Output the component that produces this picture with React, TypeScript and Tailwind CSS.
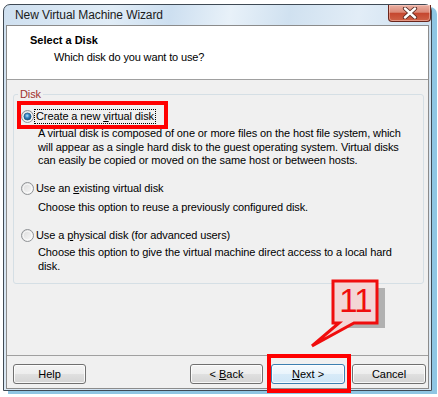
import React, { useId } from "react";

const Radio = ({ checked }: { checked?: boolean }) => {
  const id = useId().replace(/:/g, "");
  return (
    <svg width="13" height="13" viewBox="0 0 13 13" className="shrink-0">
      <defs>
        <linearGradient id={`o${id}`} x1="0" y1="0" x2="1" y2="1">
          <stop offset="0" stopColor="#d8d8d8" />
          <stop offset="1" stopColor="#fcfcfc" />
        </linearGradient>
        <radialGradient id={`d${id}`} cx="0.45" cy="0.4" r="0.6">
          <stop offset="0" stopColor="#b6e2fb" />
          <stop offset="0.45" stopColor="#3b8cc9" />
          <stop offset="1" stopColor="#124a78" />
        </radialGradient>
      </defs>
      <circle cx="6.5" cy="6.5" r="6" fill={`url(#o${id})`} stroke="#8f9295" strokeWidth="1" />
      <circle cx="6.5" cy="6.5" r="4.3" fill="none" stroke="#ffffff" strokeOpacity="0.7" strokeWidth="1" />
      {checked && <circle cx="6.5" cy="6.5" r="3.6" fill={`url(#d${id})`} stroke="#1d4f79" strokeWidth="0.6" />}
    </svg>
  );
};

const Btn = ({ children, def, w }: { children: React.ReactNode; def?: boolean; w: string }) => (
  <div
    className={
      def
        ? "h-[20px] w-[74px] rounded-[3px] border border-[#3c7fb1] bg-[linear-gradient(#f4fafe_0%,#e9f4fc_50%,#d8ebf8_50%,#cfe6f7_100%)] shadow-[inset_0_0_0_1px_rgba(255,255,255,0.8)]"
        : w === "73"
        ? "h-[20px] w-[73px] rounded-[3px] border border-[#707070] bg-[linear-gradient(#f4f4f4_0%,#ededed_50%,#e0e0e0_50%,#d4d4d4_100%)] shadow-[inset_0_0_0_1px_rgba(255,255,255,0.8)]"
        : "h-[20px] w-[74px] rounded-[3px] border border-[#707070] bg-[linear-gradient(#f4f4f4_0%,#ededed_50%,#e0e0e0_50%,#d4d4d4_100%)] shadow-[inset_0_0_0_1px_rgba(255,255,255,0.8)]"
    }
  >
    <div className="flex h-full items-center justify-center text-[11px] leading-[13px] text-black">
      <span className="whitespace-pre">{children}</span>
    </div>
  </div>
);

export default function App() {
  return (
    <div className="relative h-[397px] w-[438px] overflow-hidden bg-white pl-[3px] pt-[4px] font-['Liberation_Sans',Arial,sans-serif]">
      <div className="flex h-[387px] w-[429px] flex-col rounded-t-[7px] border border-[#3f4a55] bg-[linear-gradient(100deg,#cfe0f0_0%,#e0ecf6_22%,#cddff0_34%,#e8f1f9_46%,#d0e1f0_58%,#e2edf7_72%,#cee0f0_86%,#dce9f5_100%)] shadow-[5px_3px_0_0_#8fc6e3]">
        {/* title bar */}
        <div className="flex h-[20px] shrink-0 items-start justify-between">
          <div className="pl-[11px] pt-[3px] text-[12px] leading-[15px] tracking-[-0.1px] text-[#1b1b1b]">
            New Virtual Machine Wizard
          </div>
          <div className="flex h-[17px] w-[43px] items-center justify-center rounded-b-[4px] border border-t-0 border-[#6a261c] bg-[linear-gradient(#eab0a3_0%,#dc8a78_45%,#c5472f_52%,#cf6247_100%)] shadow-[inset_0_0_0_1px_rgba(255,220,210,0.45)]">
            <svg width="16" height="12" viewBox="0 0 16 12">
              <path d="M3 1.5 L13 10.5 M13 1.5 L3 10.5" stroke="#5a2a22" strokeWidth="4.2" strokeLinecap="round" />
              <path d="M3 1.5 L13 10.5 M13 1.5 L3 10.5" stroke="#ffffff" strokeWidth="2.4" strokeLinecap="round" />
            </svg>
          </div>
        </div>

        {/* content */}
        <div className="mx-[2px] mb-[1px] flex flex-1 flex-col border border-[#8b8b8b] bg-[#f0f0f0]">
          <div className="h-[54px] shrink-0 border-b border-[#a0a0a0] bg-white">
            <div className="pl-[23px] pt-[8px] text-[11px] font-bold leading-[13px] text-black">Select a Disk</div>
            <div className="mt-[4px] pl-[47px] text-[11px] leading-[13px] tracking-[-0.15px] text-black">
              Which disk do you want to use?
            </div>
          </div>

          <div className="flex-1 pl-[6px] pt-[8px] text-[11px] tracking-[-0.1px] text-black">
            <fieldset className="w-[411px] rounded-[3px] border border-[#d5dfe5] pb-[10px]">
              <legend className="ml-[4px] px-[2px] text-[11px] leading-[13px] text-[#a0322d]">Disk</legend>

              <div className="relative flex h-[28px] items-center pl-[7px] pt-[2px]">
                <Radio checked />
                <span className="border border-dotted border-black px-[1px] leading-[13px]">
                  Create a new <u>v</u>irtual disk
                </span>
                <div className="absolute left-[3px] top-0 h-[28px] w-[151px] border-[4px] border-[#ff0000]" />
              </div>
              <div className="-mt-[2px] pl-[24px] leading-[13.5px]">
                <div>A virtual disk is composed of one or more files on the host file system, which</div>
                <div>will appear as a single hard disk to the guest operating system. Virtual disks</div>
                <div>can easily be copied or moved on the same host or between hosts.</div>
              </div>

              <div className="mt-[13px] flex h-[16px] items-center pl-[7px]">
                <Radio />
                <span className="border border-transparent px-[1px] leading-[13px]">
                  Use an <u>e</u>xisting virtual disk
                </span>
              </div>
              <div className="mt-[4px] pl-[24px] leading-[13.5px]">
                <div>Choose this option to reuse a previously configured disk.</div>
              </div>

              <div className="mt-[13px] flex h-[16px] items-center pl-[7px]">
                <Radio />
                <span className="border border-transparent px-[1px] leading-[13px]">
                  Use a <u>p</u>hysical disk (for advanced users)
                </span>
              </div>
              <div className="mt-[3px] pl-[24px] leading-[13.5px]">
                <div>Choose this option to give the virtual machine direct access to a local hard</div>
                <div>disk.</div>
              </div>
            </fieldset>
          </div>

          <div className="flex h-[33px] shrink-0 border-t border-[#a0a0a0] pl-[6px] pr-[2px] pt-[8px]">
            <Btn w="73">Help</Btn>
            <div className="flex-1" />
            <Btn w="73">
              {"< "}
              <u>B</u>ack
            </Btn>
            <div className="relative ml-[8px]">
              <Btn def w="74">
                <u>N</u>ext{" >"}
              </Btn>
              <div className="absolute -bottom-[5px] -left-[4px] -right-[6px] -top-[10px] border-[4px] border-[#ff0000]" />
            </div>
            <div className="ml-[7px]">
              <Btn w="74">Cancel</Btn>
            </div>
          </div>
        </div>
      </div>

      {/* callout annotation */}
      <svg className="absolute left-[300px] top-[275px]" width="95" height="80" viewBox="0 0 95 80">
        <rect x="40" y="13" width="45" height="40" fill="#9c9c9c" opacity="0.75" />
        <path
          d="M33 6 H77 V48 H54 L12 71 L39 48 H33 Z"
          fill="#f3d6d6"
          stroke="#f00d0d"
          strokeWidth="3"
          strokeLinejoin="miter"
        />
        <text
          x="55.5"
          y="37"
          textAnchor="middle"
          fontFamily="'Liberation Sans', Arial, sans-serif"
          fontSize="33"
          fill="#f00d0d"
          letterSpacing="-1"
        >
          11
        </text>
      </svg>
    </div>
  );
}
